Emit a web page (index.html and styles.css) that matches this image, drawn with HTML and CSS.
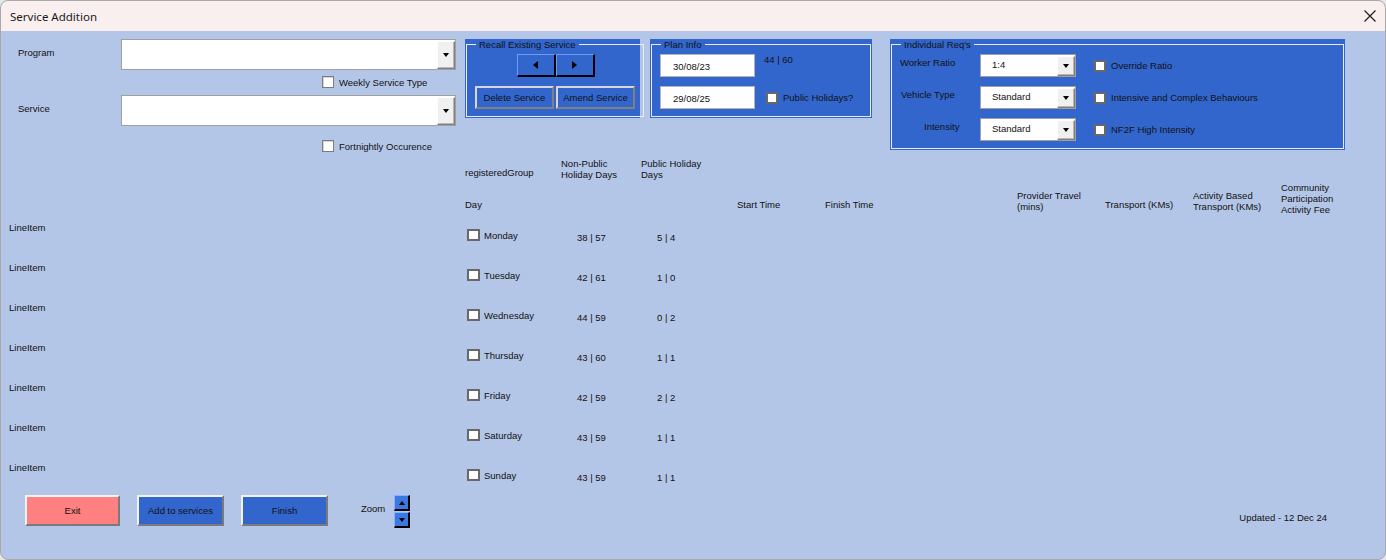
FILE: index.html
```html
<!DOCTYPE html>
<html lang="en">
<head>
  <meta charset="UTF-8" />
  <title>Service Addition</title>
  <link rel="stylesheet" href="styles.css">
</head>
<body>
  <div class="window">
    <div class="titlebar">
      <span class="title">Service Addition</span>
      <svg class="close" width="12" height="12" viewBox="0 0 12 12">
        <path d="M0.5 0.5 L11.5 11.5 M11.5 0.5 L0.5 11.5" stroke="#1e1e1e" stroke-width="1.2" fill="none"/>
      </svg>
    </div>

    <div class="form">
      <div class="top">
        <div class="selectors">
          <div class="lbl">Program</div>
          <div class="combo big"><span class="dd"><i class="down"></i></span></div>
          <div class="opt weekly"><span class="chk thin"></span>Weekly Service Type</div>
          <div class="lbl">Service</div>
          <div class="combo big"><span class="dd"><i class="down"></i></span></div>
          <div class="opt fortnight"><span class="chk thin"></span>Fortnightly Occurence</div>
        </div>

        <div class="panel recall">
          <fieldset>
            <legend>Recall Existing Service</legend>
            <div class="nav">
              <button class="navbtn"><i class="tri-left"></i></button>
              <button class="navbtn"><i class="tri-right"></i></button>
            </div>
            <div class="actions">
              <button class="btn">Delete Service</button>
              <button class="btn">Amend Service</button>
            </div>
          </fieldset>
        </div>

        <div class="panel plan">
          <fieldset>
            <legend>Plan Info</legend>
            <div class="plan-grid">
              <div class="datebox">30/08/23</div>
              <div class="count">44 | 60</div>
              <div class="datebox">29/08/25</div>
              <div class="opt"><span class="chk"></span>Public Holidays?</div>
            </div>
          </fieldset>
        </div>

        <div class="panel reqs">
          <fieldset>
            <legend>Individual Req's</legend>
            <div class="req-grid">
              <div class="rlbl">Worker Ratio</div>
              <div class="combo small">1:4<span class="dd"><i class="down"></i></span></div>
              <div class="opt"><span class="chk"></span>Override Ratio</div>
              <div class="rlbl vehicle">Vehicle Type</div>
              <div class="combo small">Standard<span class="dd"><i class="down"></i></span></div>
              <div class="opt"><span class="chk"></span>Intensive and Complex Behaviours</div>
              <div class="rlbl intensity">Intensity</div>
              <div class="combo small">Standard<span class="dd"><i class="down"></i></span></div>
              <div class="opt"><span class="chk"></span>NF2F High Intensity</div>
            </div>
          </fieldset>
        </div>
      </div>

      <div class="trow head1">
        <div></div>
        <div class="pad9">registeredGroup</div>
        <div>Non-Public<br>Holiday Days</div>
        <div>Public Holiday<br>Days</div>
      </div>
      <div class="trow head2">
        <div></div>
        <div class="pad17">Day</div>
        <div></div>
        <div></div>
        <div class="pad17">Start Time</div>
        <div class="pad17">Finish Time</div>
        <div class="pad8">Provider Travel<br>(mins)</div>
        <div class="pad17">Transport (KMs)</div>
        <div class="pad8">Activity Based<br>Transport (KMs)</div>
        <div>Community<br>Participation<br>Activity Fee</div>
      </div>

      <div class="rows" id="rows"></div>

      <div class="footer">
        <button class="bigbtn exit">Exit</button>
        <button class="bigbtn">Add to services</button>
        <button class="bigbtn">Finish</button>
        <span class="zoom">Zoom</span>
        <div class="spin">
          <span class="spinbtn"><i class="up"></i></span>
          <span class="spinbtn"><i class="down"></i></span>
        </div>
        <span class="updated">Updated - 12 Dec 24</span>
      </div>
    </div>
  </div>

  <script>
    const days = [
      ['Monday', '38 | 57', '5 | 4'],
      ['Tuesday', '42 | 61', '1 | 0'],
      ['Wednesday', '44 | 59', '0 | 2'],
      ['Thursday', '43 | 60', '1 | 1'],
      ['Friday', '42 | 59', '2 | 2'],
      ['Saturday', '43 | 59', '1 | 1'],
      ['Sunday', '43 | 59', '1 | 1']
    ];
    const rows = document.getElementById('rows');
    days.forEach(d => {
      const row = document.createElement('div');
      row.className = 'trow';
      row.innerHTML = `
        <div class="line">LineItem</div>
        <div class="day"><span class="chk"></span>${d[0]}</div>
        <div class="num">${d[1]}</div>
        <div class="num">${d[2]}</div>
      `;
      rows.appendChild(row);
    });
  </script>
</body>
</html>
```

FILE: styles.css
```css
html, body {
  margin: 0;
  padding: 0;
  background: #e6e6e6;
}
.window {
  width: 1386px;
  height: 560px;
  box-sizing: border-box;
  border: 1px solid #a8a8a8;
  border-radius: 8px;
  overflow: hidden;
  background: #b4c6e7;
  color: #111;
}
.titlebar {
  height: 30px;
  background: #f9efef;
  display: flex;
  align-items: center;
  justify-content: space-between;
  padding: 0 9px 0 9px;
}
.title {
  font: 11.5px "Noto Sans", sans-serif;
  color: #1a1a1a;
}
.close {
  margin-top: -1px;
}
.form {
  font: 9.5px/11px "Liberation Sans", Arial, sans-serif;
  padding: 8px 8px 0 7px;
}
button {
  font: inherit;
  color: #111;
  padding: 0;
  cursor: pointer;
}

/* top section */
.top {
  display: flex;
  align-items: flex-start;
  height: 113px;
}
.selectors {
  width: 457px;
  display: grid;
  grid-template-columns: 113px 335px;
}
.lbl {
  padding: 8px 0 0 10px;
}
.opt {
  display: flex;
  align-items: center;
  gap: 4px;
  white-space: nowrap;
}
.selectors .opt {
  grid-column: 2;
  margin-left: 201px;
}
.weekly {
  margin: 6px 0 7px;
}
.fortnight {
  margin-top: 14px;
}
.combo {
  position: relative;
  background: #fff;
  border: 1px solid #a0a0a0;
  box-sizing: border-box;
}
.combo.big {
  height: 31px;
}
.combo.small {
  height: 23px;
  padding: 4px 0 0 11px;
}
.dd {
  position: absolute;
  top: 1px;
  right: 0;
  bottom: 0;
  width: 18px;
  box-sizing: border-box;
  background: #f0f0f0;
  border: 1px solid;
  border-color: #fff #7e7e7e #7e7e7e #fff;
  box-shadow: inset -1px -1px 0 #b8b8b8;
  display: flex;
  align-items: center;
  justify-content: center;
}
.down {
  border-left: 3.5px solid transparent;
  border-right: 3.5px solid transparent;
  border-top: 4px solid #000;
}
.up {
  border-left: 3.5px solid transparent;
  border-right: 3.5px solid transparent;
  border-bottom: 4px solid #000;
}
.chk {
  display: inline-block;
  width: 12px;
  height: 12px;
  box-sizing: border-box;
  background: #fff;
  border: 2px solid #686868;
}
.chk.thin {
  border: 1px solid #7c7c7c;
  box-shadow: inset 1px 1px 0 #d4d4d4;
}
.opt .chk {
  margin-right: 1px;
}

/* blue frames */
.panel {
  background: #3366cc;
  padding: 0 1px 1px;
  box-sizing: border-box;
}
.panel fieldset {
  margin: 0;
  border: 1px solid #ececec;
  padding: 4px 8px 7px;
}
.panel legend {
  padding: 0 3px;
  margin-left: 1px;
  line-height: 11px;
}
.recall {
  width: 175px;
}
.plan {
  width: 222px;
  margin-left: 10px;
}
.reqs {
  width: 455px;
  margin-left: 18px;
}
.nav {
  display: flex;
  justify-content: center;
  padding-left: 1px;
}
.navbtn {
  width: 39px;
  height: 23px;
  background: #3366cc;
  border: 1px solid #6d9cf2;
  border-right: 2px solid #000;
  border-bottom: 2px solid #000;
  display: flex;
  align-items: center;
  justify-content: center;
}
.tri-left {
  border-top: 4.5px solid transparent;
  border-bottom: 4.5px solid transparent;
  border-right: 5px solid #000;
}
.tri-right {
  border-top: 4.5px solid transparent;
  border-bottom: 4.5px solid transparent;
  border-left: 5px solid #000;
}
.actions {
  display: flex;
  gap: 2px;
  margin-top: 9px;
}
.btn {
  width: 79px;
  height: 23px;
  background: #3366cc;
  border: 2px solid;
  border-color: #d6d6d6 #808080 #808080 #d6d6d6;
}
.plan-grid {
  display: grid;
  grid-template-columns: 95px auto;
  grid-auto-rows: 23px;
  column-gap: 9px;
  row-gap: 9px;
}
.datebox {
  background: #fff;
  border: 1px solid #b4b4b4;
  box-sizing: border-box;
  padding: 6px 0 0 12px;
}
.plan-grid .opt {
  margin-left: 2px;
}
.req-grid {
  display: grid;
  grid-template-columns: 80px 96px auto;
  grid-auto-rows: 23px;
  row-gap: 9px;
}
.req-grid .opt {
  margin-left: 18px;
}
.rlbl {
  padding-top: 3px;
}
.rlbl.vehicle {
  padding: 3px 0 0 1px;
}
.rlbl.intensity {
  padding: 3px 0 0 24px;
}

/* day table */
.trow {
  display: grid;
  grid-template-columns: 457px 96px 80px 96px 88px 192px 88px 88px 88px 1fr;
  align-items: start;
}
.head1 {
  margin-top: 6px;
  height: 24px;
}
.head2 {
  height: 34px;
}
.pad8 { padding-top: 8px; }
.pad9 { padding-top: 9px; }
.pad17 { padding-top: 17px; }
.rows {
  margin-top: 6px;
  display: flex;
  flex-direction: column;
  gap: 19px;
}
.rows .trow {
  height: 21px;
}
.line {
  padding-left: 1px;
}
.day {
  display: flex;
  align-items: center;
  gap: 4px;
  margin: 7px 0 0 2px;
}
.day .chk {
  width: 13px;
  height: 12px;
}
.num {
  padding: 10px 0 0 16px;
}

/* footer */
.footer {
  display: flex;
  align-items: flex-start;
  margin-top: 12px;
  padding: 0 50px 0 17px;
}
.bigbtn {
  width: 87px;
  height: 31px;
  margin-right: 17px;
  background: #3366cc;
  border: 2px solid;
  border-color: #f2f2f2 #7a7a7a #7a7a7a #f2f2f2;
}
.bigbtn.exit {
  width: 95px;
  background: #ff8080;
}
.zoom {
  margin: 8px 0 0 16px;
}
.spin {
  display: flex;
  flex-direction: column;
  gap: 1px;
  margin-left: 9px;
}
.spinbtn {
  width: 16px;
  height: 16px;
  box-sizing: border-box;
  background: #3b78e0;
  border: 1px solid #86b2ff;
  border-right: 2px solid #000;
  border-bottom: 2px solid #000;
  display: flex;
  align-items: center;
  justify-content: center;
}
.updated {
  margin: 17px 0 0 auto;
}
```
